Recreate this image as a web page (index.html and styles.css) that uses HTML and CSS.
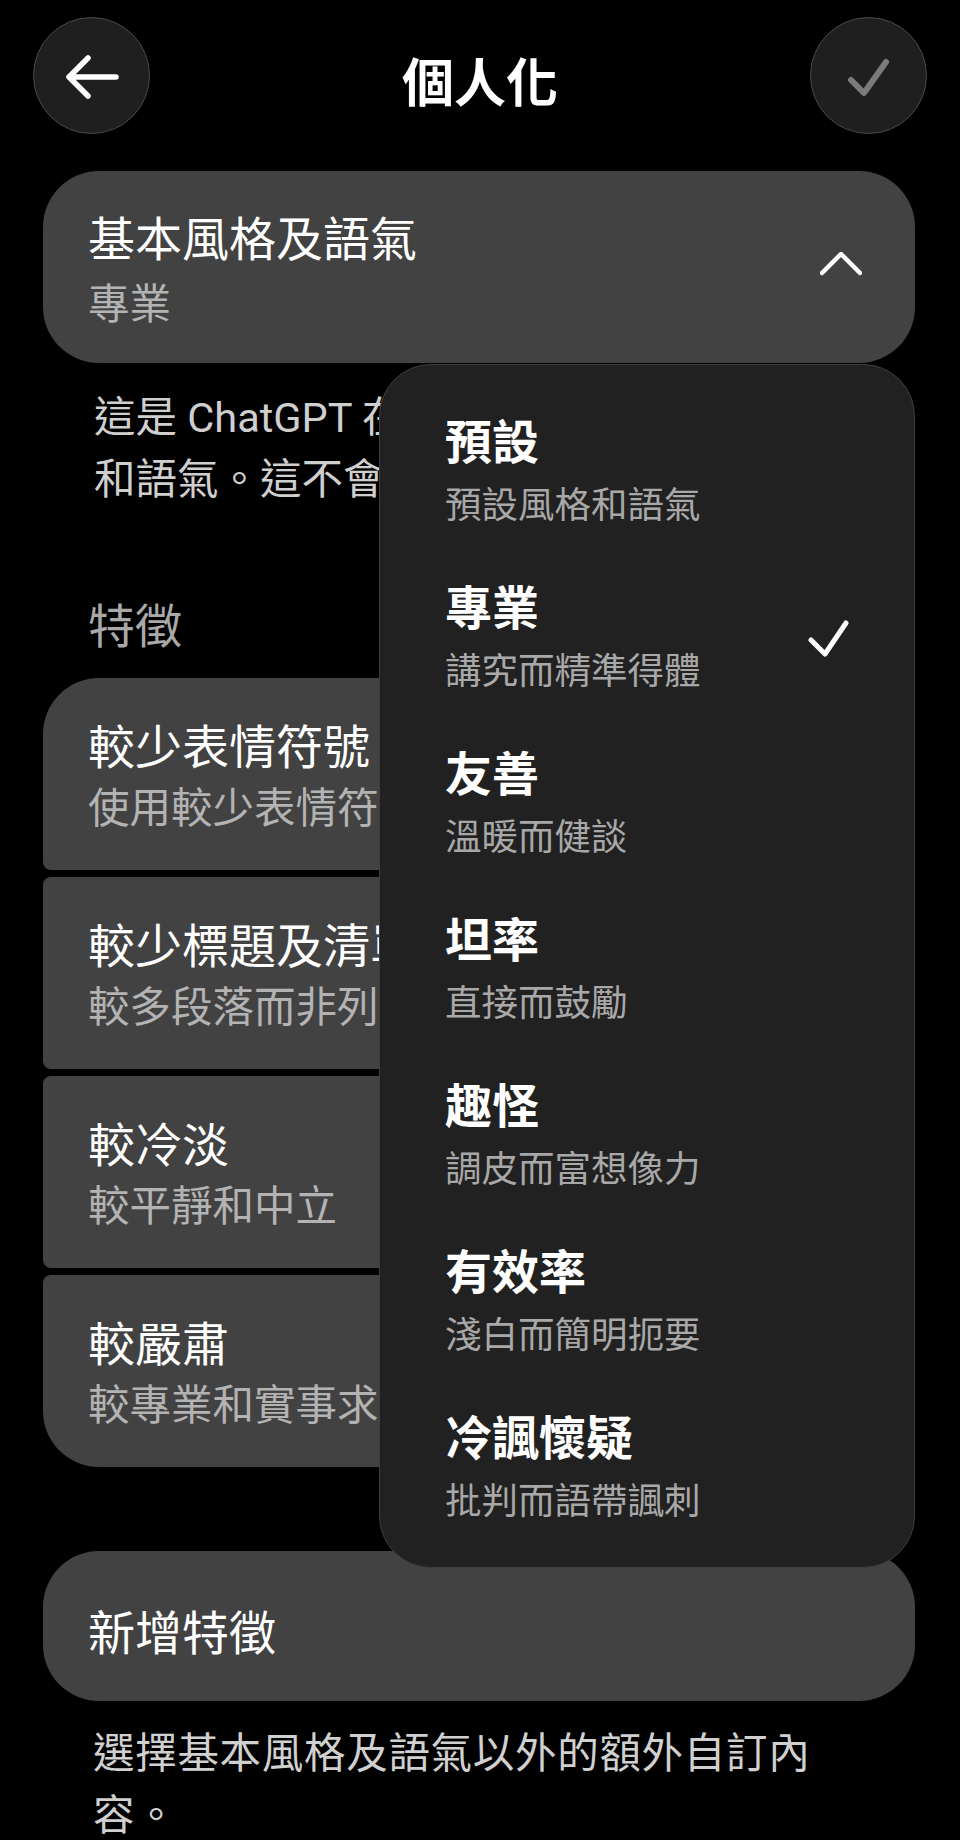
FILE: index.html
```html
<!DOCTYPE html>
<html lang="zh-Hant">
<head>
    <meta charset="UTF-8">
    <meta name="viewport" content="width=device-width, initial-scale=1.0">
    <title>個人化</title>
    <link rel="stylesheet" href="styles.css">
</head>
<body>
    <div class="page">
        <div class="topbar">
            <div class="round-btn">
                <svg width="117" height="117" viewBox="0 0 117 117">
                    <path d="M36 60 H83 M55 41 L36 60 L55 79" fill="none" stroke="#fff" stroke-width="5.5" stroke-linecap="round" stroke-linejoin="round"/>
                </svg>
            </div>
            <h1>個人化</h1>
            <div class="round-btn">
                <svg width="117" height="117" viewBox="0 0 117 117">
                    <path d="M41 63 L54 76 L76 45" fill="none" stroke="#7b7b7b" stroke-width="6" stroke-linecap="round" stroke-linejoin="round"/>
                </svg>
            </div>
        </div>

        <div class="content">
            <div class="tone-wrap">
                <div class="tone-card">
                    <div class="tone-text">
                        <div class="tone-title">基本風格及語氣</div>
                        <div class="tone-value">專業</div>
                    </div>
                    <svg class="chevron" width="42" height="26" viewBox="0 0 42 26">
                        <path d="M2 21 L21 2 L40 21" fill="none" stroke="#fff" stroke-width="4.5" stroke-linecap="round" stroke-linejoin="round"/>
                    </svg>
                </div>

                <!-- dropdown menu, open over the page -->
                <div class="menu">
                    <div class="menu-item">
                        <div>
                            <div class="menu-title">預設</div>
                            <div class="menu-sub">預設風格和語氣</div>
                        </div>
                    </div>
                    <div class="menu-item">
                        <div>
                            <div class="menu-title">專業</div>
                            <div class="menu-sub">講究而精準得體</div>
                        </div>
                        <svg width="44" height="42" viewBox="0 0 44 42">
                            <path d="M3 21 L17 35 L38 4" fill="none" stroke="#fff" stroke-width="5" stroke-linecap="round" stroke-linejoin="round"/>
                        </svg>
                    </div>
                    <div class="menu-item">
                        <div>
                            <div class="menu-title">友善</div>
                            <div class="menu-sub">溫暖而健談</div>
                        </div>
                    </div>
                    <div class="menu-item">
                        <div>
                            <div class="menu-title">坦率</div>
                            <div class="menu-sub">直接而鼓勵</div>
                        </div>
                    </div>
                    <div class="menu-item">
                        <div>
                            <div class="menu-title">趣怪</div>
                            <div class="menu-sub">調皮而富想像力</div>
                        </div>
                    </div>
                    <div class="menu-item">
                        <div>
                            <div class="menu-title">有效率</div>
                            <div class="menu-sub">淺白而簡明扼要</div>
                        </div>
                    </div>
                    <div class="menu-item">
                        <div>
                            <div class="menu-title">冷諷懷疑</div>
                            <div class="menu-sub">批判而語帶諷刺</div>
                        </div>
                    </div>
                </div>
            </div>

            <p class="desc">這是 ChatGPT 在回覆時使用的主要風格<br>和語氣。這不會影響其功能。</p>

            <div class="label">特徵</div>

            <div class="feature-list">
                <div class="feature">
                    <div class="feature-title">較少表情符號</div>
                    <div class="feature-sub">使用較少表情符號</div>
                </div>
                <div class="feature">
                    <div class="feature-title">較少標題及清單</div>
                    <div class="feature-sub">較多段落而非列點</div>
                </div>
                <div class="feature">
                    <div class="feature-title">較冷淡</div>
                    <div class="feature-sub">較平靜和中立</div>
                </div>
                <div class="feature">
                    <div class="feature-title">較嚴肅</div>
                    <div class="feature-sub">較專業和實事求是</div>
                </div>
            </div>

            <div class="add-card">新增特徵</div>

            <p class="footer-note">選擇基本風格及語氣以外的額外自訂內容。</p>
        </div>
    </div>
</body>
</html>
```

FILE: styles.css
```css
body {
    margin: 0;
    padding: 0;
    background: #000;
    color: #fff;
    font-family: Roboto, "Noto Sans CJK TC", sans-serif;
}

.page {
    width: 960px;
}

.topbar {
    display: flex;
    align-items: flex-start;
    height: 134px;
    box-sizing: border-box;
    padding: 17px 33px 0;
}

.topbar h1 {
    flex: 1;
    margin: 0;
    padding-top: 9px;
    text-align: center;
    font-size: 52px;
    font-weight: 700;
    line-height: 117px;
}

.round-btn {
    width: 117px;
    height: 117px;
    box-sizing: border-box;
    border-radius: 50%;
    background: #1f1f1f;
    border: 1.5px solid #4a4a4a;
    display: flex;
    align-items: center;
    justify-content: center;
}

.round-btn svg {
    flex: none;
}

.content {
    padding: 0 45px 0 43px;
}

.tone-wrap {
    position: relative;
    margin-top: 37px;
}

.tone-card {
    height: 192px;
    box-sizing: border-box;
    background: #424242;
    border-radius: 56px;
    display: flex;
    align-items: center;
    padding: 12px 53px 0 45px;
}

.tone-text {
    flex: 1;
}

.tone-title {
    font-size: 47px;
    line-height: 64px;
}

.tone-value {
    font-size: 41.5px;
    line-height: 66px;
    color: #b3b3b3;
}

.chevron {
    margin-top: -16px;
}

.menu {
    position: absolute;
    top: calc(100% + 1px);
    right: 0;
    width: 536px;
    box-sizing: border-box;
    background: #212121;
    border: 1.5px solid #3e3e3e;
    border-radius: 52px;
    padding: 26px 0 14px;
    z-index: 2;
}

.menu-item {
    height: 166px;
    box-sizing: border-box;
    padding: 20px 62px 20px 65px;
    display: flex;
    align-items: center;
    justify-content: space-between;
}

.menu-title {
    font-size: 47px;
    font-weight: 700;
    line-height: 63px;
}

.menu-sub {
    font-size: 36.5px;
    line-height: 63px;
    color: #a8a8a8;
}

.desc {
    margin: 24px 49px 0 51px;
    font-size: 41.5px;
    line-height: 62px;
    color: #cfcfcf;
}

.label {
    margin-top: 86px;
    padding-left: 45px;
    font-size: 47px;
    line-height: 60px;
    color: #a9a9a9;
}

.feature-list {
    display: flex;
    flex-direction: column;
    gap: 7px;
    margin-top: 21px;
}

.feature {
    height: 192px;
    box-sizing: border-box;
    background: #424242;
    border-radius: 8px;
    padding: 9px 0 0 45px;
    display: flex;
    flex-direction: column;
    justify-content: center;
}

.feature:first-child {
    border-radius: 56px 56px 8px 8px;
}

.feature:last-child {
    border-radius: 8px 8px 56px 56px;
}

.feature-title {
    font-size: 47px;
    line-height: 60px;
}

.feature-sub {
    font-size: 41.5px;
    line-height: 62px;
    color: #b3b3b3;
}

.add-card {
    margin-top: 84px;
    height: 150px;
    box-sizing: border-box;
    background: #424242;
    border-radius: 56px;
    padding: 6px 0 0 45px;
    display: flex;
    align-items: center;
    font-size: 47px;
}

.footer-note {
    margin: 22px 0 0 50px;
    max-width: 740px;
    font-size: 41.5px;
    line-height: 62px;
    letter-spacing: 0.7px;
    color: #d0d0d0;
}
```
